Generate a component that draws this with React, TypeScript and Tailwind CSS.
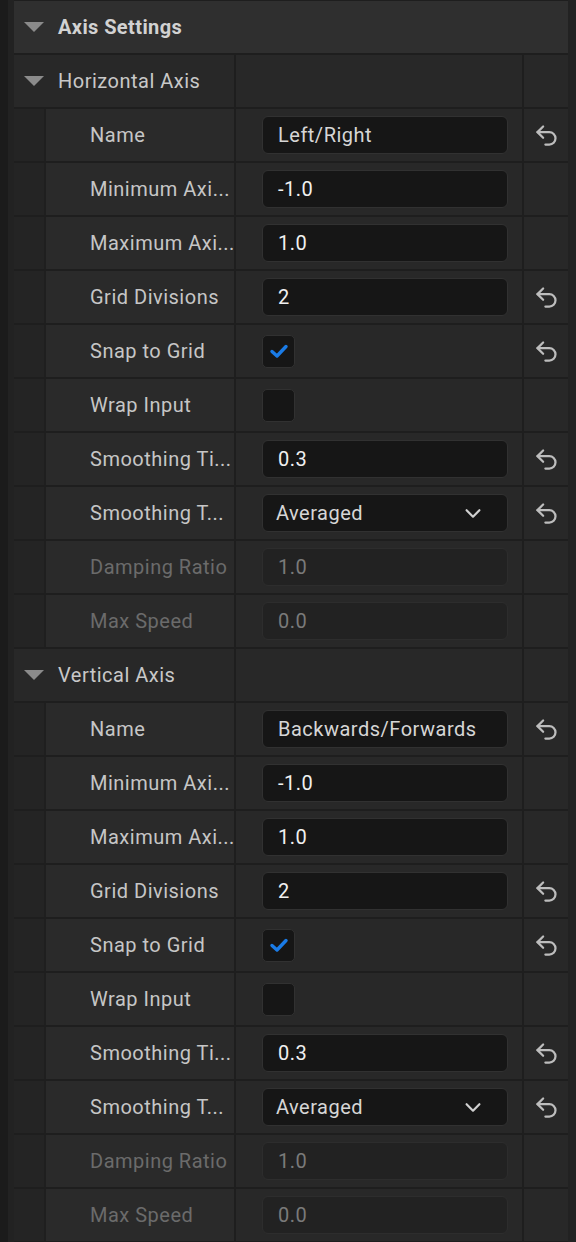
import React from "react";

const FONT = { fontFamily: "Roboto, 'Noto Sans', sans-serif" };

function Triangle() {
  return (
    <svg width="20" height="12" viewBox="0 0 20 12" className="shrink-0">
      <path d="M0 1 L20 1 L10 11 Z" fill="#8b8b8b" />
    </svg>
  );
}

function ResetIcon() {
  return (
    <svg width="27" height="27" viewBox="0 0 24 24" fill="none" stroke="#bdbdbd" strokeWidth="2" strokeLinecap="round" strokeLinejoin="round">
      <path d="M9 14 4 9l5-5" />
      <path d="M4 9h10.5a5.5 5.5 0 0 1 5.5 5.5a5.5 5.5 0 0 1-5.5 5.5H11" />
    </svg>
  );
}

type Prop =
  | { kind: "text"; label: string; value: string; reset?: boolean; disabled?: boolean; dim?: boolean }
  | { kind: "check"; label: string; checked: boolean; reset?: boolean }
  | { kind: "select"; label: string; value: string; reset?: boolean };

function SectionRow({ title }: { title: string }) {
  return (
    <div className="grid grid-cols-[220px_286px_44px] gap-[2px] h-[52px]">
      <div className="bg-[#282828] flex items-center pl-[10px] gap-[14px]">
        <Triangle />
        <span className="text-[20px] tracking-[0.5px] text-[#c8c8c8]">{title}</span>
      </div>
      <div className="bg-[#282828]" />
      <div className="bg-[#282828]" />
    </div>
  );
}

function PropRow({ p }: { p: Prop }) {
  const disabled = p.kind === "text" && p.disabled;
  return (
    <div className="grid grid-cols-[220px_286px_44px] gap-[2px] h-[52px]">
      <div className="flex h-full">
        <div className="w-[30px] bg-[#242424]" />
        <div className="w-[2px] bg-[#1f1f1f]" />
        <div className="flex-1 min-w-0 bg-[#2a2a2a] flex items-center pl-[44px]">
          <span
            className={
              "whitespace-nowrap text-[20px] tracking-[0.5px] " + (disabled ? "text-[#6b6b6b]" : "text-[#c6c6c6]")
            }
          >
            {p.label}
          </span>
        </div>
      </div>
      <div className="bg-[#282828] flex items-center pl-[26px] pr-[14px]">
        {p.kind === "text" && (
          <div
            className={
              "w-full h-[38px] rounded-[6px] border flex items-center pl-[15px] text-[20px] tracking-[0.5px] " +
              (p.disabled
                ? "bg-[#222222] border-[#2d2d2d] text-[#7a7a7a]"
                : "bg-[#161616] border-[#313131] " + (p.dim ? "text-[#d6d6d6]" : "text-[#f0f0f0]"))
            }
          >
            {p.value}
          </div>
        )}
        {p.kind === "select" && (
          <div className="w-full h-[38px] rounded-[6px] border bg-[#161616] border-[#313131] flex items-center pl-[13px] pr-[23px] text-[20px] tracking-[0.5px] text-[#d6d6d6]">
            <span className="flex-1">{p.value}</span>
            <svg width="22" height="22" viewBox="0 0 24 24" fill="none" stroke="#d0d0d0" strokeWidth="2.4" strokeLinecap="round" strokeLinejoin="round">
              <path d="m5 9 7 7 7-7" />
            </svg>
          </div>
        )}
        {p.kind === "check" && (
          <div className="w-[33px] h-[33px] rounded-[5px] border bg-[#161616] border-[#313131] flex items-center justify-center">
            {p.checked && (
              <svg width="20" height="16" viewBox="0 0 20 16" fill="none" stroke="#1a7be6" strokeWidth="3.4" strokeLinecap="round" strokeLinejoin="round">
                <path d="M3 8.5 L8 13 L17 3.5" />
              </svg>
            )}
          </div>
        )}
      </div>
      <div className="bg-[#282828] flex items-center justify-center">
        {p.reset && <ResetIcon />}
      </div>
    </div>
  );
}

function axisProps(name: string): Prop[] {
  return [
    { kind: "text", label: "Name", value: name, reset: true, dim: true },
    { kind: "text", label: "Minimum Axi...", value: "-1.0" },
    { kind: "text", label: "Maximum Axi...", value: "1.0" },
    { kind: "text", label: "Grid Divisions", value: "2", reset: true },
    { kind: "check", label: "Snap to Grid", checked: true, reset: true },
    { kind: "check", label: "Wrap Input", checked: false },
    { kind: "text", label: "Smoothing Ti...", value: "0.3", reset: true },
    { kind: "select", label: "Smoothing T...", value: "Averaged", reset: true },
    { kind: "text", label: "Damping Ratio", value: "1.0", disabled: true },
    { kind: "text", label: "Max Speed", value: "0.0", disabled: true },
  ];
}

export default function App() {
  return (
    <div className="w-[576px] h-[1242px] flex bg-[#1b1b1b] overflow-hidden" style={FONT}>
      <div className="w-[8px] bg-[#1b1b1b]" />
      <div className="w-[6px] bg-[#222222]" />
      <div className="flex-1 bg-[#1e1e1e] flex flex-col gap-[2px] pt-[1px]">
        <div className="h-[52px] bg-[#2f2f2f] flex items-center pl-[10px] gap-[14px]">
          <Triangle />
          <span className="text-[20px] font-bold tracking-[0.4px] text-[#d2d2d2]">Axis Settings</span>
        </div>
        <SectionRow title="Horizontal Axis" />
        {axisProps("Left/Right").map((p, i) => (
          <PropRow key={"h" + i} p={p} />
        ))}
        <SectionRow title="Vertical Axis" />
        {axisProps("Backwards/Forwards").map((p, i) => (
          <PropRow key={"v" + i} p={p} />
        ))}
      </div>
      <div className="w-[8px] bg-[#222222]" />
    </div>
  );
}
